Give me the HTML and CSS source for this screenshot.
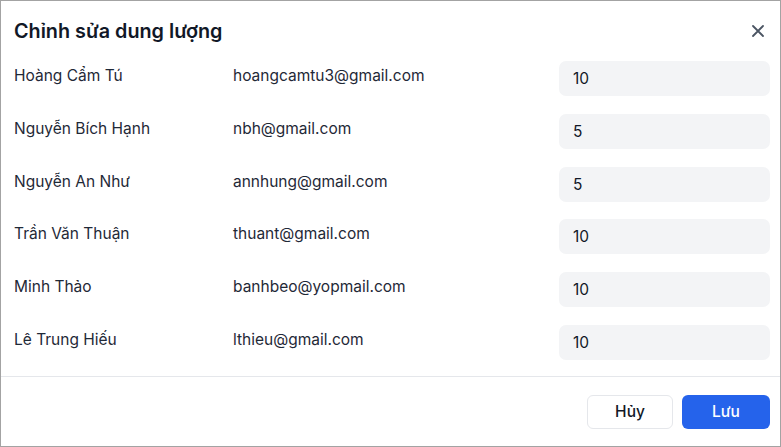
FILE: index.html
```html
<!DOCTYPE html>
<html lang="vi">
<head>
<meta charset="utf-8">
<title>Chỉnh sửa dung lượng</title>
<link rel="stylesheet" href="styles.css">
</head>
<body>
<div class="dialog">
  <div class="header">
    <h1 class="title">Chỉnh sửa dung lượng</h1>
    <button class="close" aria-label="Đóng">
      <svg width="12" height="12" viewBox="0 0 12 12"><path d="M1 1L11 11M11 1L1 11" stroke="#4b5563" stroke-width="1.8" stroke-linecap="round"/></svg>
    </button>
  </div>
  <div class="rows">
    <div class="row"><span class="name">Hoàng Cẩm Tú</span><span class="email">hoangcamtu3@gmail.com</span><input class="qty" value="10"></div>
    <div class="row"><span class="name">Nguyễn Bích Hạnh</span><span class="email">nbh@gmail.com</span><input class="qty" value="5"></div>
    <div class="row"><span class="name">Nguyễn An Như</span><span class="email">annhung@gmail.com</span><input class="qty" value="5"></div>
    <div class="row"><span class="name">Trần Văn Thuận</span><span class="email">thuant@gmail.com</span><input class="qty" value="10"></div>
    <div class="row"><span class="name">Minh Thảo</span><span class="email">banhbeo@yopmail.com</span><input class="qty" value="10"></div>
    <div class="row"><span class="name">Lê Trung Hiếu</span><span class="email">lthieu@gmail.com</span><input class="qty" value="10"></div>
  </div>
  <div class="footer">
    <button class="btn btn-cancel">Hủy</button>
    <button class="btn btn-save">Lưu</button>
  </div>
</div>
</body>
</html>
```
FILE: styles.css
```css
* { box-sizing: border-box; }
html, body { margin: 0; padding: 0; background: #fff; }
body { font-family: Inter, "Noto Sans", sans-serif; color: #1f2937; }
.dialog {
  width: 781px;
  height: 447px;
  border: 1px solid #a3a3a3;
  display: flex;
  flex-direction: column;
}
.header {
  display: flex;
  align-items: center;
  justify-content: space-between;
  padding: 15px 16px 0 13px;
  height: 45px;
}
.title {
  margin: 0;
  font-size: 19.8px;
  font-weight: 600;
  color: #111827;
  line-height: 28px;
}
.close {
  border: 0;
  background: none;
  padding: 0;
  width: 12px;
  height: 12px;
  display: flex;
  cursor: pointer;
}
.rows {
  display: flex;
  flex-direction: column;
  gap: 17.8px;
  padding: 15px 10px 16px 13px;
  border-bottom: 1px solid #e5e7eb;
}
.row {
  display: grid;
  grid-template-columns: 219px 326px 211px;
  align-items: start;
  font-size: 15.5px;
  line-height: 20px;
}
.name, .email { padding-top: 5px; color: #1f2937; }
.qty {
  height: 35px;
  border: 0;
  border-radius: 7px;
  background: #f3f4f6;
  padding: 0 14px;
  font: inherit;
  font-size: 15.5px;
  color: #111827;
  outline: none;
}
.footer {
  display: flex;
  justify-content: flex-end;
  gap: 9px;
  padding: 18px 10px 0 13px;
}
.btn {
  height: 34px;
  border-radius: 6px;
  font-family: inherit;
  font-size: 15.5px;
  font-weight: 500;
  cursor: pointer;
}
.btn-cancel {
  width: 86px;
  background: #fff;
  border: 1px solid #e5e7eb;
  color: #111827;
}
.btn-save {
  width: 88px;
  background: #2563eb;
  border: 0;
  color: #fff;
}
```
